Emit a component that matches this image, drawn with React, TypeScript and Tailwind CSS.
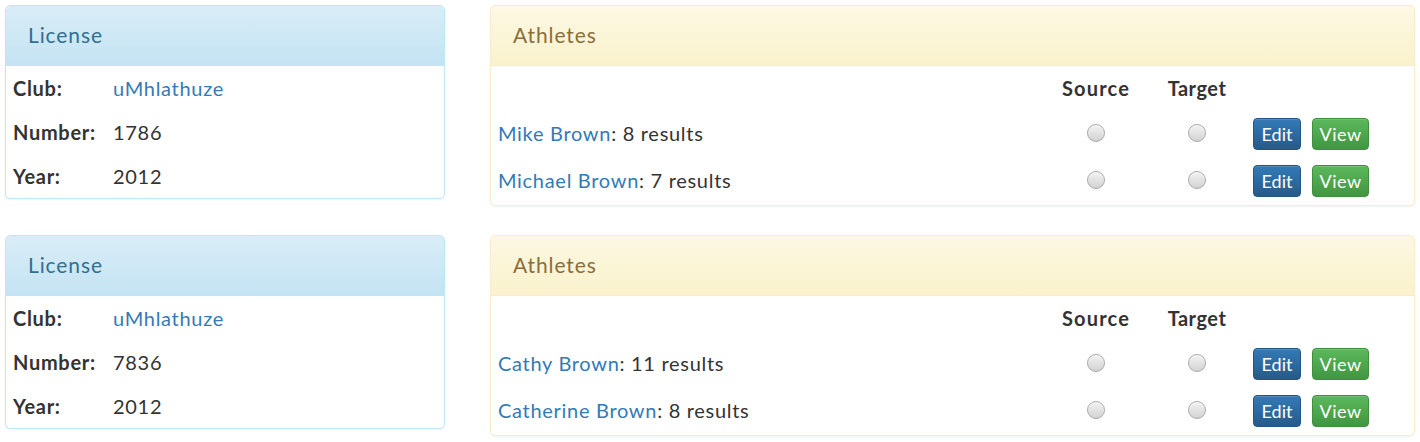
const licenses = [
  {
    club: "uMhlathuze",
    number: "1786",
    year: "2012",
    athletes: [
      { name: "Mike Brown", results: 8 },
      { name: "Michael Brown", results: 7 },
    ],
  },
  {
    club: "uMhlathuze",
    number: "7836",
    year: "2012",
    athletes: [
      { name: "Cathy Brown", results: 11 },
      { name: "Catherine Brown", results: 8 },
    ],
  },
]

function Radio() {
  return (
    <input
      type="radio"
      className="h-[18px] w-[18px] appearance-none rounded-full border border-[#a9a9a9] bg-[linear-gradient(#f2f2f2,#d3d3d3)] shadow-[inset_0_1px_1px_rgba(255,255,255,0.8)]"
    />
  )
}

function LicensePanel({ club, number, year }: { club: string; number: string; year: string }) {
  return (
    <div className="w-[440px] shrink-0 self-start overflow-hidden rounded-[5px] border border-[#bce8f1] bg-white shadow-[0_1px_2px_rgba(0,0,0,0.05)]">
      <div className="flex h-[60px] items-center border-b border-[#bce8f1] bg-[linear-gradient(#d9edf7,#c4e3f3)] px-[22px] pb-[2px] text-[21px] tracking-[0.9px] text-[#31708f]">
        License
      </div>
      <div className="grid grid-cols-[100px_1fr] pl-[7px] text-[20px] text-[#333]">
        <div className="flex h-[44px] items-center font-bold">Club:</div>
        <div className="flex h-[44px] items-center">
          <a href="#" className="text-[#337ab7]">{club}</a>
        </div>
        <div className="flex h-[44px] items-center font-bold">Number:</div>
        <div className="flex h-[44px] items-center">{number}</div>
        <div className="flex h-[44px] items-center font-bold">Year:</div>
        <div className="flex h-[44px] items-center">{year}</div>
      </div>
    </div>
  )
}

function AthletesPanel({ athletes }: { athletes: { name: string; results: number }[] }) {
  return (
    <div className="w-[925px] shrink-0 overflow-hidden rounded-[5px] border border-[#faebcc] bg-white shadow-[0_1px_2px_rgba(0,0,0,0.05)]">
      <div className="flex h-[60px] items-center border-b border-[#faebcc] bg-[linear-gradient(#fcf8e3,#faf2cc)] px-[22px] pb-[2px] text-[21px] tracking-[0.9px] text-[#8a6d3b]">
        Athletes
      </div>
      <div className="grid grid-cols-[555px_100px_102px_1fr] pb-[2px] text-[20px] text-[#333]">
        <div className="h-[43px]" />
        <div className="flex h-[43px] items-center justify-center font-bold tracking-[1.2px]">Source</div>
        <div className="flex h-[43px] items-center justify-center font-bold tracking-[0.5px]">Target</div>
        <div className="h-[43px]" />
        {athletes.map((a) => (
          <div key={a.name} className="contents">
            <div className="flex h-[47px] items-center pl-[7px]">
              <a href="#" className="text-[#337ab7]">{a.name}</a>
              <span>: {a.results} results</span>
            </div>
            <div className="flex h-[47px] items-center justify-center">
              <Radio />
            </div>
            <div className="flex h-[47px] items-center justify-center">
              <Radio />
            </div>
            <div className="flex h-[47px] items-center gap-[11px] pl-[5px] pt-[3px] tracking-normal">
              <button className="flex h-[32px] w-[48px] items-center justify-center rounded-[4px] border border-[#245580] bg-[linear-gradient(#337ab7,#265a88)] text-[18px] text-white shadow-[inset_0_1px_0_rgba(255,255,255,0.15)]">
                Edit
              </button>
              <button className="flex h-[32px] w-[57px] items-center justify-center rounded-[4px] border border-[#3e8f3e] bg-[linear-gradient(#5cb85c,#419641)] text-[18px] tracking-[0.5px] text-white shadow-[inset_0_1px_0_rgba(255,255,255,0.15)]">
                View
              </button>
            </div>
          </div>
        ))}
      </div>
    </div>
  )
}

export default function App() {
  return (
    <div className="flex flex-col gap-[29px] bg-white p-[5px] font-['Lato',sans-serif] tracking-[0.7px]">
      {licenses.map((l) => (
        <div key={l.number} className="flex items-start gap-[45px]">
          <LicensePanel club={l.club} number={l.number} year={l.year} />
          <AthletesPanel athletes={l.athletes} />
        </div>
      ))}
    </div>
  )
}
